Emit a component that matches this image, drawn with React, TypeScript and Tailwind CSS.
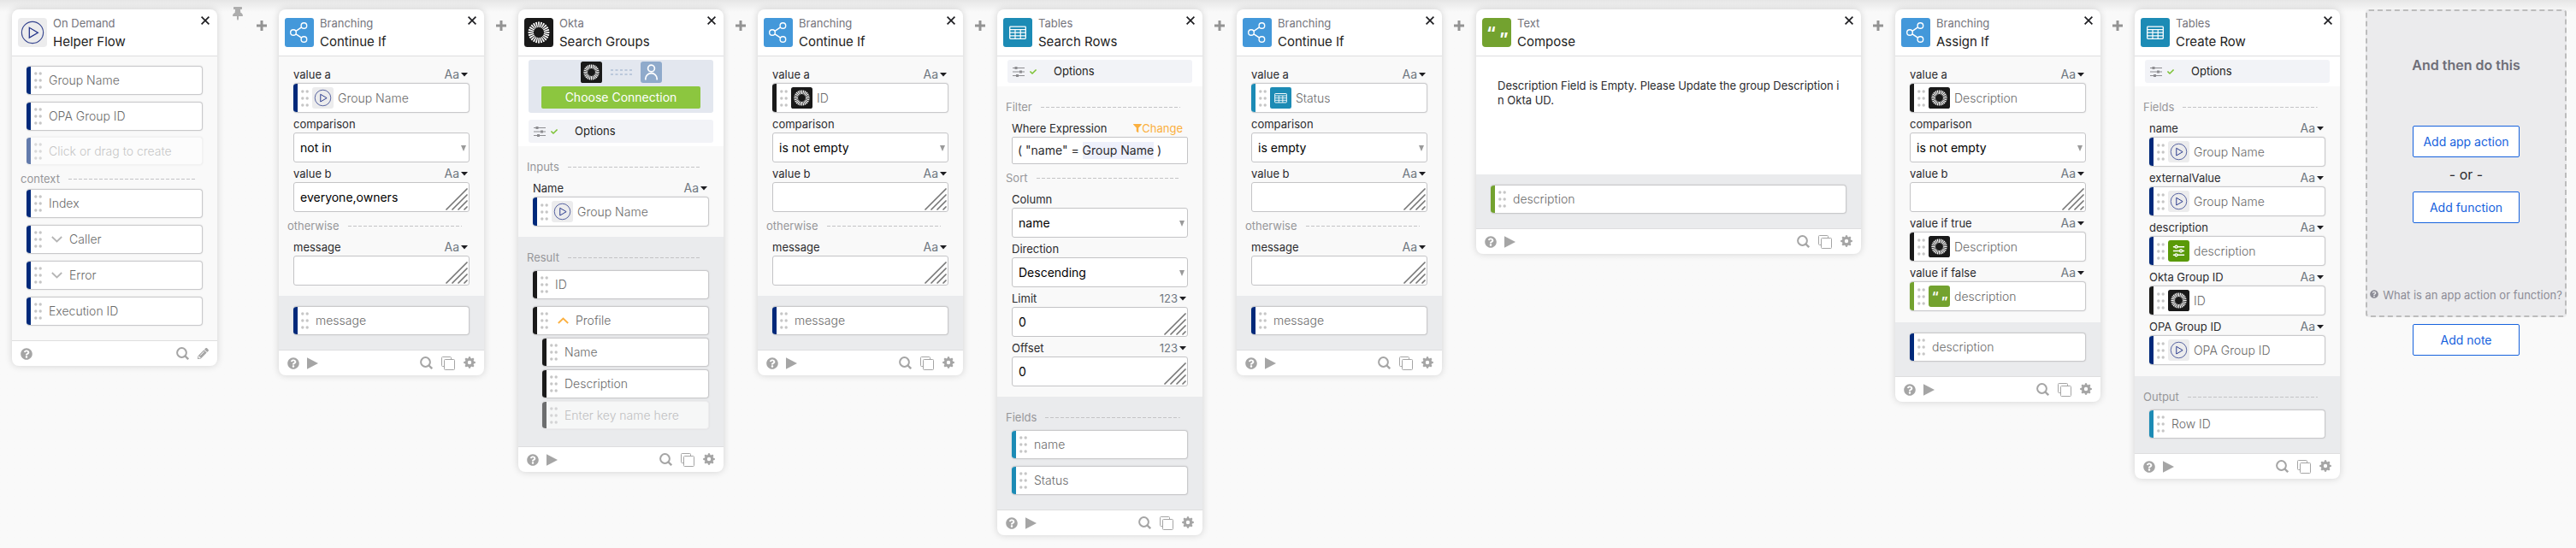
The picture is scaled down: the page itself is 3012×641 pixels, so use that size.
import { useId } from "react";
import type { ReactNode } from "react";
import { FaQuestionCircle, FaPencilAlt, FaThumbtack, FaCheck, FaFilter } from "react-icons/fa";

type IconName = "play" | "branch" | "okta" | "table" | "text" | "helper";
type Tone = "navy" | "black" | "teal" | "green";

const toneClass: Record<Tone, string> = {
  navy: "bg-[#00297a]",
  black: "bg-[#1a1a1a]",
  teal: "bg-[#1c8bb5]",
  green: "bg-[#73a22f]",
};

const rays = Array.from({ length: 24 }, (_, i) => i * 15);
const teeth = Array.from({ length: 8 }, (_, i) => i * 45);

function AppIcon({ name, className }: { name: IconName; className: string }) {
  return (
    <svg viewBox="0 0 34 34" className={className} aria-hidden="true">
      {name === "play" && (
        <>
          <rect width="34" height="34" rx="4" fill="#ececed" />
          <circle cx="17" cy="17" r="12.6" fill="none" stroke="#36458f" strokeWidth="1.1" />
          <path d="M13.3 11.3v11.8l10-5.9z" fill="none" stroke="#25358a" strokeWidth="1.3" />
        </>
      )}
      {name === "branch" && (
        <>
          <rect width="34" height="34" rx="3" fill="#4398da" />
          <g fill="none" stroke="#fff" strokeWidth="1.4">
            <path d="M13 15.3l6.5-4.4M13 18.8l6.5 4.4" />
            <circle cx="10" cy="17" r="3.3" />
            <circle cx="22.4" cy="9" r="3.3" />
            <circle cx="22.4" cy="25" r="3.3" />
          </g>
        </>
      )}
      {name === "okta" && (
        <>
          <rect width="34" height="34" rx="3.5" fill="#191919" />
          {rays.map((a) => (
            <path
              key={a}
              d="M16.5 11L16 4.6h2L17.5 11z"
              fill="#fff"
              transform={`rotate(${a} 17 17)`}
            />
          ))}
        </>
      )}
      {name === "table" && (
        <>
          <rect width="34" height="34" rx="3" fill="#1c8bb5" />
          <rect x="7.7" y="10.2" width="18.6" height="14.2" rx="0.8" fill="none" stroke="#fff" strokeWidth="1.3" />
          <path
            d="M7.7 13.6h18.6M7.7 17.2h18.6M7.7 20.8h18.6M14 13.6v10.8M20.2 13.6v10.8"
            stroke="#fff"
            strokeWidth="1.2"
          />
        </>
      )}
      {name === "text" && (
        <>
          <rect width="34" height="34" rx="4" fill="#73a22f" />
          <text x="5" y="25" fontSize="20" fontWeight="700" fontFamily="Inter, sans-serif" fill="#fff">
            “
          </text>
          <text x="20" y="32" fontSize="20" fontWeight="700" fontFamily="Inter, sans-serif" fill="#fff">
            ”
          </text>
        </>
      )}
      {name === "helper" && (
        <>
          <rect width="34" height="34" rx="4" fill="#5a9a08" />
          <g stroke="#fff" strokeWidth="1.8" fill="#5a9a08">
            <path d="M8 10.5h18M8 17h18M8 23.5h18" />
            <circle cx="13" cy="10.5" r="2" />
            <circle cx="20.5" cy="17" r="2" />
            <circle cx="13" cy="23.5" r="2" />
          </g>
        </>
      )}
    </svg>
  );
}

function DragDots() {
  return (
    <svg viewBox="0 0 9 20" className="h-5 w-[9px] shrink-0" fill="#c6c6c6" aria-hidden="true">
      {[2, 10, 18].map((y) => (
        <g key={y}>
          <circle cx="1.8" cy={y} r="1.7" />
          <circle cx="7.2" cy={y} r="1.7" />
        </g>
      ))}
    </svg>
  );
}

function Chip({
  tone,
  children,
  className = "h-[34px]",
}: {
  tone: Tone;
  children: ReactNode;
  className?: string;
}) {
  return (
    <div
      className={`flex items-center overflow-hidden rounded-[4px] border border-l-0 border-[#c9c9cb] bg-white text-sm font-light text-[#6b6b6b] shadow-[0_0_2px_rgba(0,0,0,0.12)] ${className}`}
    >
      <span className={`mr-1 h-full w-[5px] shrink-0 ${toneClass[tone]}`} />
      {children}
    </div>
  );
}

function OutChip({ tone, label, arrow }: { tone: Tone; label: string; arrow?: "up" | "down" }) {
  return (
    <Chip tone={tone}>
      <DragDots />
      {arrow && (
        <svg
          viewBox="0 0 13 8"
          className="ml-[11px] h-2 w-[13px]"
          fill="none"
          stroke={arrow === "up" ? "#fbb040" : "#b5b5b5"}
          strokeWidth="1.8"
        >
          <path d={arrow === "up" ? "M.8 7l5.7-5.4L12.200 7" : "M.8 1l5.700 5.400L12.200 1"} />
        </svg>
      )}
      <span className="ml-2 truncate">{label}</span>
    </Chip>
  );
}

function GhostChip({ tone, placeholder }: { tone: Tone; placeholder: string }) {
  return (
    <div className="opacity-60">
      <Chip tone={tone} className="h-[33px] border-[#eeeeee]">
        <DragDots />
        <input
          aria-label={placeholder}
          placeholder={placeholder}
          className="ml-2 w-full min-w-0 bg-transparent outline-none placeholder:text-[#a5a5a5]"
        />
      </Chip>
    </div>
  );
}

function TypeButton({ kind }: { kind: "Aa" | "123" }) {
  return (
    <button
      type="button"
      className={`flex items-center gap-[2px] pr-[2px] text-[#6e7780] ${kind === "Aa" ? "text-sm leading-4" : "text-[13px] leading-4"}`}
    >
      {kind}
      <svg viewBox="0 0 8 5" className="h-[5px] w-2" fill="#1d1d21">
        <path d="M0 0h8L4 4.600z" />
      </svg>
    </button>
  );
}

function LabelRow({ label, id, kind, aside }: { label: string; id?: string; kind?: "Aa" | "123"; aside?: ReactNode }) {
  return (
    <div className="flex h-[23px] items-end justify-between pb-[2px] text-[13px] leading-4 text-[#2b2b2e]">
      {id ? <label htmlFor={id}>{label}</label> : <span>{label}</span>}
      {kind && <TypeButton kind={kind} />}
      {aside}
    </div>
  );
}

function ChipField({ label, tone, icon, value }: { label: string; tone: Tone; icon: IconName; value: string }) {
  return (
    <div className="px-[17px]">
      <LabelRow label={label} kind="Aa" />
      <Chip tone={tone} className="h-[35px]">
        <DragDots />
        <AppIcon name={icon} className="ml-1 size-[25px] shrink-0" />
        <span className="ml-[5px] truncate">{value}</span>
      </Chip>
    </div>
  );
}

function SelectField({ label, value }: { label: string; value: string }) {
  const id = useId();
  return (
    <div className="px-[17px]">
      <LabelRow label={label} id={id} />
      <div className="relative">
        <select
          id={id}
          className="block h-[35px] w-full appearance-none rounded-[3px] border border-[#c4c4c6] bg-white pl-[7px] text-sm text-black"
        >
          <option>{value}</option>
        </select>
        <svg viewBox="0 0 6 7" className="pointer-events-none absolute top-[15px] right-1 h-[7px] w-[6px]" fill="#9a9a9a">
          <path d="M0 0h6L3 7z" />
        </svg>
      </div>
    </div>
  );
}

function TextField({ label, value = "", kind = "Aa" }: { label: string; value?: string; kind?: "Aa" | "123" }) {
  const id = useId();
  return (
    <div className="px-[17px]">
      <LabelRow label={label} id={id} kind={kind} />
      <div className="relative">
        <textarea
          id={id}
          rows={1}
          defaultValue={value}
          className="block h-[35px] w-full resize-none overflow-hidden rounded-[3px] border border-[#c4c4c6] bg-white px-[7px] py-[7px] text-sm leading-5 text-black"
        />
        <svg
          viewBox="0 0 26 26"
          className="pointer-events-none absolute right-[2px] bottom-[2px] size-[26px]"
          stroke="#777"
          strokeWidth="1.7"
          strokeLinecap="round"
        >
          <path d="M1 25L25 1M8 25L25 8M15 25l10-10M22 25l3-3" />
        </svg>
      </div>
    </div>
  );
}

function Divider({ label, tall }: { label: string; tall?: boolean }) {
  return (
    <div className={`flex pr-[26px] pl-[10px] text-[13px] leading-4 text-[#97979a] ${tall ? "h-9 pt-4" : "h-7 pt-2"}`}>
      <span>{label}</span>
      <svg className="ml-[10px] h-4 min-w-0 flex-1" stroke="#c4c4c6" strokeDasharray="4 2">
        <line x1="0" y1="8.5" x2="100%" y2="8.5" />
      </svg>
    </div>
  );
}

function OptionsBar() {
  return (
    <button type="button" className="mx-3 flex h-[27px] items-center rounded-[3px] bg-[#f2f3f7] pl-[6px] text-[13px] text-[#1d1d21]">
      <svg viewBox="0 0 14 12" className="h-3 w-[14px]" stroke="#8d8d91" fill="#8d8d91">
        <path d="M0 1.500h14M0 6h14M0 10.500h14" strokeWidth="1" />
        <path d="M2.500 0h3v3h-3zM8 4.500h3v3H8zM4 9h3v3H4z" stroke="none" />
      </svg>
      <FaCheck className="ml-[6px] size-2 text-[#7cc234]" />
      <span className="ml-5">Options</span>
    </button>
  );
}

function CloseIcon() {
  return (
    <svg viewBox="0 0 10 10" className="size-[10px]" stroke="#1d1d21" strokeWidth="1.7">
      <path d="M.6.6l8.800 8.800M9.400.6L.6 9.400" />
    </svg>
  );
}

function SearchIcon() {
  return (
    <svg viewBox="0 0 15 15" className="size-[15px]" fill="none" stroke="#a5a5a5" strokeWidth="2">
      <circle cx="6.500" cy="6.500" r="5.400" />
      <path d="M10.500 10.500l3.700 3.700" strokeWidth="2.400" />
    </svg>
  );
}

function CopyIcon() {
  return (
    <svg viewBox="0 0 16 16" className="size-4" fill="none" stroke="#a5a5a5">
      <path d="M3.500 11.500h-2a1 1 0 0 1-1-1v-9a1 1 0 0 1 1-1h9a1 1 0 0 1 1 1v2" />
      <rect x="3.500" y="3.500" width="12" height="12" rx="1" />
    </svg>
  );
}

function GearIcon() {
  return (
    <svg viewBox="0 0 14 14" className="size-[14px] -translate-y-px" fill="#a5a5a5">
      <circle cx="7" cy="7" r="3.700" fill="none" stroke="#a5a5a5" strokeWidth="3" />
      {teeth.map((a) => (
        <path key={a} d="M5.500 2.500L6 .2h2l.5 2.300z" transform={`rotate(${a} 7 7)`} />
      ))}
    </svg>
  );
}

function Card({
  icon,
  app,
  title,
  editable,
  width = "w-60",
  children,
}: {
  icon: IconName;
  app: string;
  title: string;
  editable?: boolean;
  width?: string;
  children: ReactNode;
}) {
  return (
    <article className={`shrink-0 overflow-hidden rounded-lg bg-white shadow-[0_0_8px_rgba(0,0,0,0.16)] ${width}`}>
      <header className="flex h-[55px] items-start border-b border-[#dededf] pt-[10px] pr-[9px] pl-[7px]">
        <AppIcon name={icon} className="size-[34px] shrink-0" />
        <div className="-mt-[2px] ml-[7px] flex-1">
          <p className="text-[13px] leading-4 text-[#74747c]">{app}</p>
          <h2 className="mt-1 text-[15px] leading-5 text-[#1d1d21]">{title}</h2>
        </div>
        <button type="button" aria-label="Close" className="-mt-[2px]">
          <CloseIcon />
        </button>
      </header>
      {children}
      <footer className="flex h-[30px] items-center border-t border-[#dededf] px-[10px] text-[#a5a5a5]">
        <button type="button" aria-label="Help">
          <FaQuestionCircle className="size-[14px]" />
        </button>
        {!editable && (
          <button type="button" aria-label="Run" className="ml-[9px]">
            <svg viewBox="0 0 13 14" className="h-[14px] w-[13px]" fill="#a5a5a5">
              <path d="M0 .3v13.400L13 7z" />
            </svg>
          </button>
        )}
        <div className="ml-auto flex items-center gap-[10px]">
          <button type="button" aria-label="Search">
            <SearchIcon />
          </button>
          {editable ? (
            <button type="button" aria-label="Edit">
              <FaPencilAlt className="size-[13px]" />
            </button>
          ) : (
            <>
              <button type="button" aria-label="Duplicate">
                <CopyIcon />
              </button>
              <button type="button" aria-label="Settings">
                <GearIcon />
              </button>
            </>
          )}
        </div>
      </footer>
    </article>
  );
}

function Inputs({ className = "pt-2 pb-3", children }: { className?: string; children: ReactNode }) {
  return <section className={`bg-[#f9f9f9] ${className}`}>{children}</section>;
}

function Outputs({ heading, children }: { heading?: string; children: ReactNode }) {
  return (
    <section className={`bg-[#eaebed] pb-[17px] ${heading ? "" : "pt-3"}`}>
      {heading && <Divider label={heading} tall />}
      <div className={`flex flex-col gap-2 px-[17px] ${heading ? "pt-[3px]" : ""}`}>{children}</div>
    </section>
  );
}

function AddStep() {
  return (
    <div className="flex w-10 shrink-0 justify-center pt-[13px]">
      <button type="button" aria-label="Add step" className="h-3">
        <svg viewBox="0 0 12 12" className="size-3" stroke="#939393" strokeWidth="3">
          <path d="M6 0v12M0 6h12" />
        </svg>
      </button>
    </div>
  );
}

function ContinueIf({ operator, valueB, children }: { operator: string; valueB?: string; children: ReactNode }) {
  return (
    <Card icon="branch" app="Branching" title="Continue If">
      <Inputs>
        {children}
        <SelectField label="comparison" value={operator} />
        <TextField label="value b" value={valueB} />
        <Divider label="otherwise" />
        <TextField label="message" />
      </Inputs>
      <Outputs>
        <OutChip tone="navy" label="message" />
      </Outputs>
    </Card>
  );
}

function BlueButton({ children }: { children: ReactNode }) {
  return (
    <button
      type="button"
      className="h-[37px] w-[125px] rounded-[2px] border border-[#1662dd] bg-white text-sm text-[#1662dd]"
    >
      {children}
    </button>
  );
}

export default function App() {
  return (
    <main className="min-h-screen w-full overflow-x-auto bg-[#f9f9f9] bg-linear-to-b from-[#e6e6e6] to-[#f9f9f9] to-[14px] font-['Inter',sans-serif]">
      <div className="flex w-max items-start pt-[11px] pr-[11px] pb-3 pl-[14px]">
        <Card icon="play" app="On Demand" title="Helper Flow" editable>
          <section className="bg-[#f9f9f9] pt-[11px] pb-[17px]">
            <div className="flex flex-col gap-2 px-[17px]">
              <OutChip tone="navy" label="Group Name" />
              <OutChip tone="navy" label="OPA Group ID" />
            </div>
            <div className="px-[17px] pt-[7px]">
              <GhostChip tone="navy" placeholder="Click or drag to create" />
            </div>
            <Divider label="context" />
            <div className="flex flex-col gap-2 px-[17px]">
              <OutChip tone="navy" label="Index" />
              <OutChip tone="navy" label="Caller" arrow="down" />
              <OutChip tone="navy" label="Error" arrow="down" />
              <OutChip tone="navy" label="Execution ID" />
            </div>
          </section>
        </Card>

        <div className="flex w-8 shrink-0 justify-center pl-4">
          <button type="button" aria-label="Pin" className="-mt-[3px]">
            <FaThumbtack className="h-4 w-3 text-[#adadad]" />
          </button>
        </div>
        <AddStep />

        <ContinueIf operator="not in" valueB="everyone,owners">
          <ChipField label="value a" tone="navy" icon="play" value="Group Name" />
        </ContinueIf>
        <AddStep />

        <Card icon="okta" app="Okta" title="Search Groups">
          <div className="flex flex-col gap-2 pt-1 pb-1">
            <div className="mx-3 flex h-[62px] flex-col items-center rounded-[3px] bg-[#e3e7ef] pt-[2px]">
              <div className="flex items-center gap-[10px]">
                <AppIcon name="okta" className="size-[25px]" />
                <svg viewBox="0 0 25 7" className="h-[7px] w-[25px]" stroke="#93a9c8" strokeDasharray="3 2.500">
                  <path d="M0 1h25M0 6h25" />
                </svg>
                <svg viewBox="0 0 25 25" className="size-[25px]">
                  <rect width="25" height="25" rx="3" fill="#8faacb" />
                  <g fill="none" stroke="#fff" strokeWidth="1.700">
                    <circle cx="12.500" cy="8" r="3.900" />
                    <path d="M5.800 21.500v-1.500a6.700 6.300 0 0 1 13.400 0v1.500" />
                  </g>
                </svg>
              </div>
              <button type="button" className="mt-1 h-[26px] w-[186px] rounded-[2px] bg-[#8cc63f] text-sm text-white">
                Choose Connection
              </button>
            </div>
            <OptionsBar />
          </div>
          <Inputs className="pb-3">
            <Divider label="Inputs" tall />
            <ChipField label="Name" tone="navy" icon="play" value="Group Name" />
          </Inputs>
          <Outputs heading="Result">
            <OutChip tone="black" label="ID" />
            <OutChip tone="black" label="Profile" arrow="up" />
            <div className="-mt-[5px] flex flex-col gap-[3px] pb-[3px] pl-[11px]">
              <OutChip tone="black" label="Name" />
              <OutChip tone="black" label="Description" />
              <GhostChip tone="black" placeholder="Enter key name here" />
            </div>
          </Outputs>
        </Card>
        <AddStep />

        <ContinueIf operator="is not empty">
          <ChipField label="value a" tone="black" icon="okta" value="ID" />
        </ContinueIf>
        <AddStep />

        <Card icon="table" app="Tables" title="Search Rows">
          <div className="flex flex-col py-1">
            <OptionsBar />
          </div>
          <Inputs className="pb-3">
            <Divider label="Filter" tall />
            <div className="px-[17px]">
              <LabelRow
                label="Where Expression"
                aside={
                  <button type="button" className="flex items-center pr-[6px] text-[#fbb040]">
                    <FaFilter className="size-[10px]" />
                    Change
                  </button>
                }
              />
              <div className="flex h-8 items-center rounded-[2px] border border-[#c4c4c6] bg-white pl-[6px] text-sm whitespace-pre text-[#2b2b2e]">
                {'( "name" = '}
                <span className="bg-[#eef0fb]">Group Name</span>
                {" )"}
              </div>
            </div>
            <Divider label="Sort" />
            <SelectField label="Column" value="name" />
            <SelectField label="Direction" value="Descending" />
            <TextField label="Limit" value="0" kind="123" />
            <TextField label="Offset" value="0" kind="123" />
          </Inputs>
          <Outputs heading="Fields">
            <OutChip tone="teal" label="name" />
            <OutChip tone="teal" label="Status" />
          </Outputs>
        </Card>
        <AddStep />

        <ContinueIf operator="is empty">
          <ChipField label="value a" tone="teal" icon="table" value="Status" />
        </ContinueIf>
        <AddStep />

        <Card icon="text" app="Text" title="Compose" width="w-[450px]">
          <textarea
            aria-label="Text to compose"
            defaultValue="Description Field is Empty. Please Update the group Description in Okta UD."
            className="block h-[138px] w-full resize-none bg-white px-[25px] pt-[26px] text-[13px] leading-[17px] break-all text-[#2b2b2e] outline-none"
          />
          <Outputs>
            <OutChip tone="green" label="description" />
          </Outputs>
        </Card>
        <AddStep />

        <Card icon="branch" app="Branching" title="Assign If">
          <Inputs className="pt-2 pb-[13px]">
            <ChipField label="value a" tone="black" icon="okta" value="Description" />
            <SelectField label="comparison" value="is not empty" />
            <TextField label="value b" />
            <ChipField label="value if true" tone="black" icon="okta" value="Description" />
            <ChipField label="value if false" tone="green" icon="text" value="description" />
          </Inputs>
          <Outputs>
            <OutChip tone="navy" label="description" />
          </Outputs>
        </Card>
        <AddStep />

        <Card icon="table" app="Tables" title="Create Row">
          <div className="flex flex-col py-1">
            <OptionsBar />
          </div>
          <Inputs className="pb-[13px]">
            <Divider label="Fields" tall />
            <ChipField label="name" tone="navy" icon="play" value="Group Name" />
            <ChipField label="externalValue" tone="navy" icon="play" value="Group Name" />
            <ChipField label="description" tone="navy" icon="helper" value="description" />
            <ChipField label="Okta Group ID" tone="black" icon="okta" value="ID" />
            <ChipField label="OPA Group ID" tone="navy" icon="play" value="OPA Group ID" />
          </Inputs>
          <Outputs heading="Output">
            <OutChip tone="teal" label="Row ID" />
          </Outputs>
        </Card>

        <aside className="ml-[30px] flex w-[235px] shrink-0 flex-col items-center gap-2">
          <div className="flex h-[360px] w-full flex-col items-center rounded border-2 border-dashed border-[#bcbcbc] bg-[#ebebed]">
            <h2 className="mt-[52px] mb-[60px] text-base leading-[22px] font-semibold text-[#6e6e78]">And then do this</h2>
            <BlueButton>Add app action</BlueButton>
            <p className="py-[9px] text-base leading-[22px] text-[#2b2b2e]">- or -</p>
            <BlueButton>Add function</BlueButton>
            <a href="#help" className="mt-auto mb-4 flex items-center gap-[5px] text-[13px] leading-4 whitespace-nowrap text-[#8c8c96]">
              <FaQuestionCircle className="size-[10px] -translate-y-px" />
              What is an app action or function?
            </a>
          </div>
          <BlueButton>Add note</BlueButton>
        </aside>
      </div>
    </main>
  );
}
